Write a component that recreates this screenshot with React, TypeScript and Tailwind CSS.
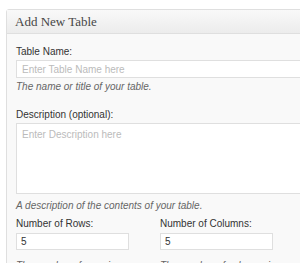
import React from "react";

const sans = { fontFamily: '"Liberation Sans", Arial, sans-serif' };

function Field({ label, value, help }: { label: string; value: string; help: string }) {
  return (
    <div className="flex flex-col">
      <label className="text-[10px] leading-[13px] text-[#333]">{label}</label>
      <input
        readOnly
        value={value}
        className="mt-[3px] h-[17px] w-[113px] border border-[#dfdfdf] bg-white px-[4px] text-[10px] text-[#333] outline-none"
      />
      <p className="mt-[9px] text-[10px] italic leading-[13px] text-[#666]">{help}</p>
    </div>
  );
}

export default function App() {
  return (
    <div className="h-[263px] w-[300px] overflow-hidden bg-white" style={sans}>
      <div className="ml-[6px] mt-[9px] w-[320px] rounded-tl-[3px] border border-[#dfdfdf] bg-[#f9f9f9]">
        <div className="h-[24px] border-b border-[#dfdfdf] bg-gradient-to-b from-[#f9f9f9] to-[#ececec] pl-[8px]">
          <h3
            className="text-[13px] leading-[23px] text-[#464646]"
            style={{ fontFamily: '"Liberation Serif", Georgia, serif' }}
          >
            Add New Table
          </h3>
        </div>

        <div className="px-[9px] pt-[11px]">
          <label className="block text-[10px] leading-[13px] text-[#333]">Table Name:</label>
          <input
            readOnly
            placeholder="Enter Table Name here"
            className="mt-[2px] block h-[18px] w-full border border-[#dfdfdf] bg-white px-[5px] text-[10px] text-[#333] outline-none placeholder:text-[#bbb]"
          />
          <p className="mt-[2px] text-[10px] italic leading-[13px] text-[#666]">The name or title of your table.</p>

          <label className="mt-[15px] block text-[10px] leading-[13px] text-[#333]">Description (optional):</label>
          <textarea
            readOnly
            placeholder="Enter Description here"
            className="mt-[2px] block h-[71px] w-full resize-none border border-[#dfdfdf] bg-white px-[5px] py-[3px] text-[10px] text-[#333] outline-none placeholder:text-[#bbb]"
          />
          <p className="mt-[5px] text-[10px] italic leading-[13px] text-[#666]">
            A description of the contents of your table.
          </p>

          <div className="mt-[5px] grid grid-cols-[144px_144px]">
            <Field label="Number of Rows:" value="5" help="The number of rows in your table." />
            <Field label="Number of Columns:" value="5" help="The number of columns in your table." />
          </div>
        </div>
      </div>
    </div>
  );
}
